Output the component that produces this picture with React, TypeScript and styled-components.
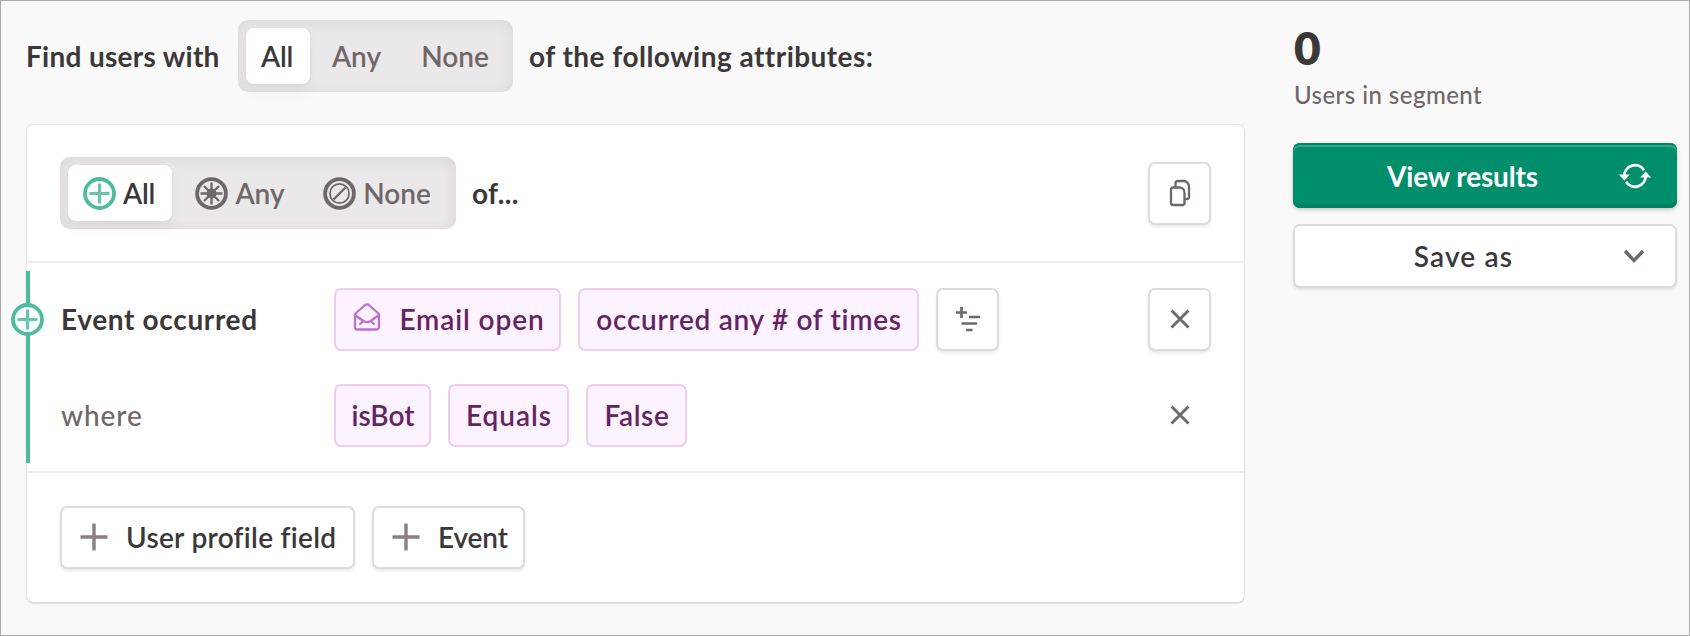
import React from "react";
import styled, { createGlobalStyle, css } from "styled-components";

const Global = createGlobalStyle`
  * { box-sizing: border-box; }
  body {
    margin: 0;
    background: #f9f9f9;
    font-family: Lato, "Liberation Sans", sans-serif;
    font-size: 28px;
    line-height: 34px;
    color: #3b3839;
    font-variant-ligatures: none;
  }
`;

const ink = "#3b3839";
const muted = "#706769";
const mint = "#4dbb9e";

const Page = styled.div`
  display: flex;
  gap: 49px;
  width: 1690px;
  height: 636px;
  padding: 18px 0 0 26px;
  border: 1px solid #aaa;
  background: #f9f9f9;
`;

const Builder = styled.main`
  width: 1217px;
`;

const Text = styled.span<{ $track?: number; $weight?: number; $color?: string }>`
  white-space: nowrap;
  letter-spacing: ${(p) => p.$track ?? 0}px;
  font-weight: ${(p) => p.$weight ?? 600};
  color: ${(p) => p.$color ?? "inherit"};
`;

const Heading = styled.div`
  display: flex;
  align-items: center;
  height: 73px;
  margin-bottom: 33px;
`;

const Lead = styled.div`
  width: 212px;
  margin-left: -1px;
`;

const Segmented = styled.div<{ $width: number }>`
  display: flex;
  align-items: center;
  width: ${(p) => p.$width}px;
  height: 72px;
  padding: 8px;
  border-radius: 10px;
  background: #ebe8e9;
  box-shadow: inset 0 2px 14px rgba(40, 30, 40, 0.09);
`;

const Segment = styled.button<{ $width: number; $active?: boolean }>`
  display: flex;
  align-items: center;
  justify-content: center;
  gap: 7px;
  flex: none;
  width: ${(p) => p.$width}px;
  height: 56px;
  padding: 0;
  border: 0;
  border-radius: 8px;
  background: transparent;
  font: inherit;
  color: ${muted};
  ${(p) =>
    p.$active &&
    css`
      padding-right: 2px;
      background: #fff;
      color: ${ink};
      box-shadow: 0 1px 4px rgba(0, 0, 0, 0.06), 0 8px 16px rgba(0, 0, 0, 0.04);
    `}
`;

const After = styled.div<{ $gap: number }>`
  margin-left: ${(p) => p.$gap}px;
`;

const Card = styled.section`
  border-radius: 6px;
  background: #fff;
  box-shadow: 0 0 2px 1px rgba(0, 0, 0, 0.09), 0 2px 1px rgba(0, 0, 0, 0.07);
`;

const CardHeader = styled.div`
  display: flex;
  align-items: center;
  height: 138px;
  padding: 0 33px 0 33px;
  border-bottom: 2px solid #ececec;
`;

const Conditions = styled.div`
  position: relative;
  display: flex;
  flex-direction: column;
  gap: 33px;
  padding: 25px 33px 24px 34px;
  border-bottom: 2px solid #ececec;
`;

const Rail = styled.div`
  position: absolute;
  left: -1px;
  top: 8px;
  bottom: 8px;
  width: 4px;
  background: ${mint};
`;

const RailBadge = styled.div`
  position: absolute;
  left: -16px;
  top: 40px;
  width: 33px;
  height: 33px;
  svg { display: block; }
`;

const Condition = styled.div`
  display: flex;
  align-items: center;
  gap: 17px;
  height: 63px;
`;

const Label = styled.div`
  width: 256px;
  padding-bottom: 2px;
`;

const Token = styled.button<{ $width: number; $icon?: boolean }>`
  display: flex;
  align-items: center;
  justify-content: center;
  gap: 18px;
  flex: none;
  width: ${(p) => p.$width}px;
  height: 63px;
  padding: 0 0 1px ${(p) => (p.$icon ? 3 : 1)}px;
  border: 2px solid #ebcdf0;
  border-radius: 7px;
  background: #fdf2ff;
  font: inherit;
  color: #642463;
  svg { margin-bottom: 5px; }
`;

const raised = css`
  border: 2px solid #dddbdc;
  border-radius: 7px;
  background: #fff;
  box-shadow: 0 2px 3px rgba(0, 0, 0, 0.09);
`;

const IconButton = styled.button<{ $plain?: boolean; $end?: boolean }>`
  display: flex;
  align-items: center;
  justify-content: center;
  flex: none;
  width: 63px;
  height: 63px;
  padding: 0 0 1px;
  ${(p) => (p.$plain ? "border: 0; background: transparent;" : raised)}
  ${(p) => p.$end && "margin-left: auto;"}
`;

const Footer = styled.div`
  display: flex;
  gap: 17px;
  padding: 33px;
`;

const AddButton = styled.button<{ $width: number }>`
  display: flex;
  align-items: center;
  gap: 18px;
  width: ${(p) => p.$width}px;
  height: 63px;
  padding: 0 0 1px 18px;
  font: inherit;
  color: ${ink};
  ${raised}
`;

const Sidebar = styled.aside`
  display: flex;
  flex-direction: column;
  width: 384px;
`;

const Count = styled.div`
  height: 58px;
  padding-left: 1px;
  font-size: 46px;
  line-height: 58px;
  font-weight: 800;
`;

const CountLabel = styled.div`
  height: 66px;
  padding: 4px 0 0 1px;
  font-size: 24px;
  line-height: 28px;
  color: ${muted};
`;

const WideButton = styled.button<{ $primary?: boolean }>`
  display: grid;
  grid-template-columns: 1fr 83px;
  align-items: center;
  justify-items: center;
  width: 384px;
  height: 64px;
  margin-bottom: 16px;
  padding: 0 0 1px;
  font: inherit;
  color: ${ink};
  ${raised}
  ${(p) =>
    p.$primary &&
    css`
      grid-template-columns: 1fr 85px;
      height: 65px;
      padding: 0;
      border: 0;
      background: #008e6b;
      color: #fff;
      box-shadow: inset 0 2px 0 #008862, inset 0 4px 0 #33a689, inset 0 -4px 2px #00815f,
        0 2px 4px rgba(0, 0, 0, 0.2);
    `}
`;

const ButtonLabel = styled.span`
  padding-left: 40px;
`;

const PlusCircle = () => (
  <svg width="33" height="33" viewBox="0 0 33 33" fill="none" stroke={mint}>
    <circle cx="16.5" cy="16.5" r="14.5" fill="#fff" strokeWidth="3.8" />
    <path d="M16.5 6.500v20M6.500 16.500h20" strokeWidth="3.200" opacity=".85" />
  </svg>
);

const AnyCircle = () => (
  <svg width="33" height="33" viewBox="0 0 33 33" fill="none" stroke={muted}>
    <circle cx="16.5" cy="16.5" r="14.4" strokeWidth="3.900" />
    <circle cx="16.5" cy="16.5" r="5" fill={muted} stroke="none" />
    <path d="M16.500 5.500v22M5.500 16.500h22M9 9l15 15M24 9L9 24" strokeWidth="2.300" />
  </svg>
);

const NoneCircle = () => (
  <svg width="33" height="33" viewBox="0 0 33 33" fill="none" stroke={muted}>
    <circle cx="16.5" cy="16.5" r="14.4" strokeWidth="3.900" />
    <circle cx="16.5" cy="16.5" r="9.6" strokeWidth="1.700" />
    <path d="M10.500 22.500l12-12" strokeWidth="2.400" />
  </svg>
);

const CopyIcon = () => (
  <svg width="22" height="28" viewBox="0 0 22 28" fill="none" stroke={muted} strokeWidth="2.300" strokeLinejoin="round">
    <path d="M2 10.500a2 2 0 0 1 2-2h6.500c3 0 5 2.500 5 5.500V24a2 2 0 0 1-2 2H4a2 2 0 0 1-2-2z" />
    <path d="M6.500 8V4a2 2 0 0 1 2-2h6c3 0 5.500 2.500 5.500 5.500V18a2 2 0 0 1-2 2h-2" />
  </svg>
);

const CloseIcon = () => (
  <svg width="20" height="20" viewBox="0 0 20 20" fill="none" stroke={muted} strokeWidth="2.900">
    <path d="M1.500 1.500l17 17M18.500 1.500l-17 17" />
  </svg>
);

const FilterIcon = () => (
  <svg width="26" height="26" viewBox="0 0 26 26" fill="none" stroke={muted} strokeWidth="2.700">
    <path d="M1 6.500h11M6.500 1v11" />
    <path d="M14 11h11M6.500 17.500h15.500M11 24h6.500" />
  </svg>
);

const MailOpenIcon = () => (
  <svg width="28" height="28" viewBox="0 0 28 28" fill="none" stroke="#bd70cf" strokeWidth="2.300" strokeLinejoin="round">
    <path d="M2 11L11.500 2.500a3.800 3.800 0 0 1 5 0L26 11V24a2.500 2.500 0 0 1-2.500 2.500h-19A2.500 2.500 0 0 1 2 24z" />
    <path d="M2.500 12.500l8 5.500c2.500 1.700 4.500 1.700 7 0l8-5.500M6.500 21.500l4-3.500M21.500 21.500l-4-3.500" />
  </svg>
);

const PlusIcon = () => (
  <svg width="28" height="28" viewBox="0 0 28 28" fill="none" stroke="#898083" strokeWidth="3.400">
    <path d="M14 .500v27M.500 14h27" />
  </svg>
);

const RefreshIcon = () => (
  <svg width="34" height="28" viewBox="0 0 34 28" fill="none" stroke="#fff" strokeWidth="2.900">
    <path d="M6.300 14A10.700 10.700 0 0 1 26 8.200" />
    <path d="M27.700 14A10.700 10.700 0 0 1 8 19.800" />
    <path d="M.8 12.600h11L6.300 18.600zM22.200 15.400h11L27.700 9.400z" fill="#fff" stroke="none" />
  </svg>
);

const ChevronIcon = () => (
  <svg width="22" height="14" viewBox="0 0 22 14" fill="none" stroke={muted} strokeWidth="3.400">
    <path d="M2 2l9 9.500L20 2" />
  </svg>
);

export default function App() {
  return (
    <>
      <Global />
      <Page>
        <Builder>
          <Heading>
            <Lead>
              <Text $track={0.3} $weight={700}>Find users with</Text>
            </Lead>
            <Segmented $width={275}>
              <Segment $width={64} $active><Text $track={-0.2}>All</Text></Segment>
              <Segment $width={93}><Text>Any</Text></Segment>
              <Segment $width={104}><Text>None</Text></Segment>
            </Segmented>
            <After $gap={16}>
              <Text $track={0.47} $weight={700}>of the following attributes:</Text>
            </After>
          </Heading>
          <Card>
            <CardHeader>
              <Segmented $width={396}>
                <Segment $width={104} $active><PlusCircle /><Text $track={-0.2}>All</Text></Segment>
                <Segment $width={136}><AnyCircle /><Text>Any</Text></Segment>
                <Segment $width={138}><NoneCircle /><Text>None</Text></Segment>
              </Segmented>
              <After $gap={16}>
                <Text $track={0.3} $weight={700}>of...</Text>
              </After>
              <IconButton $end aria-label="Duplicate"><CopyIcon /></IconButton>
            </CardHeader>
            <Conditions>
              <Rail />
              <RailBadge><PlusCircle /></RailBadge>
              <Condition>
                <Label><Text $track={0.65} $weight={700}>Event occurred</Text></Label>
                <Token $width={227} $icon><MailOpenIcon /><Text $track={0.9}>Email open</Text></Token>
                <Token $width={341}><Text $track={0.7}>occurred any # of times</Text></Token>
                <IconButton aria-label="Add filter"><FilterIcon /></IconButton>
                <IconButton $end aria-label="Remove event"><CloseIcon /></IconButton>
              </Condition>
              <Condition>
                <Label><Text $track={0.9} $weight={500} $color={muted}>where</Text></Label>
                <Token $width={97}><Text $track={0}>isBot</Text></Token>
                <Token $width={121}><Text $track={1}>Equals</Text></Token>
                <Token $width={101}><Text $track={0.6}>False</Text></Token>
                <IconButton $plain $end aria-label="Remove filter"><CloseIcon /></IconButton>
              </Condition>
            </Conditions>
            <Footer>
              <AddButton $width={295}><PlusIcon /><Text $track={0.3}>User profile field</Text></AddButton>
              <AddButton $width={153}><PlusIcon /><Text $track={-0.1}>Event</Text></AddButton>
            </Footer>
          </Card>
        </Builder>
        <Sidebar>
          <Count>0</Count>
          <CountLabel><Text $track={0.45} $weight={500}>Users in segment</Text></CountLabel>
          <WideButton $primary>
            <ButtonLabel><Text $track={-0.15} $weight={700}>View results</Text></ButtonLabel>
            <RefreshIcon />
          </WideButton>
          <WideButton>
            <ButtonLabel><Text $track={1.2}>Save as</Text></ButtonLabel>
            <ChevronIcon />
          </WideButton>
        </Sidebar>
      </Page>
    </>
  );
}
